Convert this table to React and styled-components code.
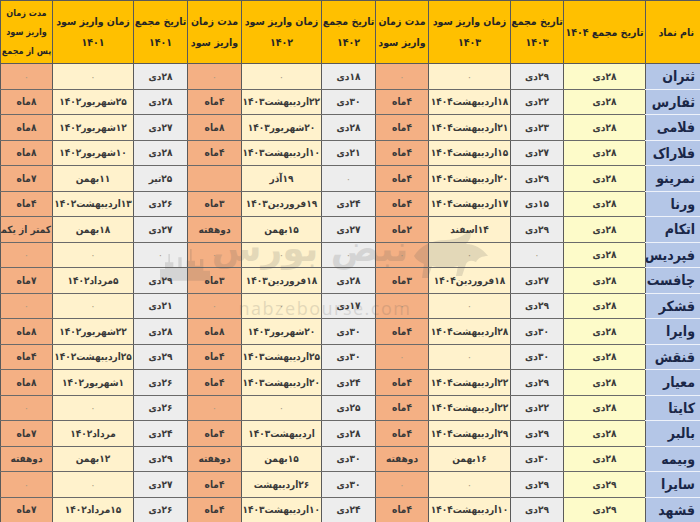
import React from 'react';
import styled, { createGlobalStyle } from 'styled-components';

const GlobalStyle = createGlobalStyle`
  html, body {
    margin: 0;
    padding: 0;
    background: #ffffff;
  }
  body {
    font-family: "DejaVu Sans Condensed", "DejaVu Sans", sans-serif;
  }
`;

const Page = styled.div`
  position: relative;
  width: 700px;
  height: 522px;
  overflow: hidden;
`;

const Table = styled.table`
  width: 700px;
  border-collapse: collapse;
  table-layout: fixed;
  direction: rtl;
`;

const HeadCell = styled.th`
  height: 62px;
  padding: 0;
  background: #ffc000;
  border: 1px solid #5a5a5a;
  color: #262626;
  font-family: "DejaVu Sans Condensed", "DejaVu Sans", sans-serif;
  font-size: ${p => (p.$small ? '9px' : '10.5px')};
  font-weight: 700;
  line-height: ${p => (p.$small ? '19px' : '21px')};
  letter-spacing: ${p => (p.$small ? '-0.3px' : '0')};
  text-align: ${p => (p.$align === 'right' ? 'right' : 'center')};
  padding-right: ${p => (p.$align === 'right' ? '6px' : '0')};
  vertical-align: middle;
  white-space: nowrap;
  overflow: hidden;
`;

const cellColors = {
  name: '#b4c6e7',
  m4: '#fdfbc9',
  m: '#ededed',
  p: '#fff2cc',
  d: '#f4b084',
};

const Cell = styled.td`
  height: 24.5px;
  padding: 0 1px;
  background: ${p => cellColors[p.$kind]};
  border-left: 1px solid #5a5a5a;
  border-right: 1px solid #5a5a5a;
  border-bottom: 1px solid ${p => (p.$kind === 'name' ? '#eef2fa' : '#6a6a6a')};
  color: ${p => (p.$kind === 'name' ? '#1a2748' : '#3a3a3a')};
  font-family: "DejaVu Sans Condensed", "DejaVu Sans", sans-serif;
  font-size: ${p => (p.$kind === 'name' ? '14px' : '10px')};
  font-weight: 700;
  text-align: ${p => (p.$kind === 'name' ? 'right' : 'center')};
  padding-right: ${p => (p.$kind === 'name' ? '5px' : '1px')};
  white-space: nowrap;
  overflow: hidden;
`;

const Zero = styled.span`
  color: #a89a82;
  font-weight: 400;
`;

const Watermark = styled.div`
  position: absolute;
  left: 205px;
  top: 216px;
  width: 240px;
  height: 115px;
  pointer-events: none;
  opacity: 0.16;
  display: flex;
  flex-direction: column;
  align-items: center;
`;

const MarkRow = styled.div`
  display: flex;
  align-items: flex-end;
  gap: 2px;
  direction: rtl;
`;

const MarkTitle = styled.div`
  font-family: "DejaVu Sans", sans-serif;
  font-size: 36px;
  font-weight: 700;
  color: #555555;
  line-height: 66px;
  white-space: nowrap;
`;

const MarkSite = styled.div`
  font-family: "Open Sans", "Liberation Sans", sans-serif;
  font-size: 18px;
  letter-spacing: 1.5px;
  color: #555555;
  margin-top: 14px;
`;

const widths = [55, 82, 53, 82, 53, 54, 80, 54, 54, 81, 52];
const kinds = ['name', 'm4', 'm', 'p', 'd', 'm', 'p', 'd', 'm', 'p', 'd'];

const headers = [
  { lines: ['نام نماد'], align: 'right' },
  { lines: ['تاریخ مجمع ۱۴۰۴'] },
  { lines: ['تاریخ مجمع', '۱۴۰۳'] },
  { lines: ['زمان واریز سود', '۱۴۰۳'] },
  { lines: ['مدت زمان', 'واریز سود'] },
  { lines: ['تاریخ مجمع', '۱۴۰۲'] },
  { lines: ['زمان واریز سود', '۱۴۰۲'] },
  { lines: ['مدت زمان', 'واریز سود'] },
  { lines: ['تاریخ مجمع', '۱۴۰۱'] },
  { lines: ['زمان واریز سود', '۱۴۰۱'] },
  { lines: ['مدت زمان', 'واریز سود', 'پس از مجمع'], small: true },
];

const Z = '۰';

const rows = [
  ['ثتران', '۲۸دی', '۲۹دی', Z, Z, '۱۸دی', Z, Z, '۲۸دی', Z, Z],
  ['ثفارس', '۲۸دی', '۲۲دی', '۱۸اردیبهشت۱۴۰۴', '۴ماه', '۳۰دی', '۲۲اردیبهشت۱۴۰۳', '۴ماه', '۲۸دی', '۲۵شهریور۱۴۰۲', '۸ماه'],
  ['فلامی', '۲۸دی', '۲۳دی', '۲۱اردیبهشت۱۴۰۴', '۴ماه', '۲۸دی', '۲۰شهریور۱۴۰۳', '۸ماه', '۲۷دی', '۱۲شهریور۱۴۰۲', '۸ماه'],
  ['فلاراک', '۲۸دی', '۲۷دی', '۱۵اردیبهشت۱۴۰۴', '۴ماه', '۲۱دی', '۱۰اردیبهشت۱۴۰۳', '۴ماه', '۲۸دی', '۱۰شهریور۱۴۰۲', '۸ماه'],
  ['نمرینو', '۲۸دی', '۲۹دی', '۲۰اردیبهشت۱۴۰۴', '۴ماه', Z, '۱۹آذر', '', '۲۵تیر', '۱۱بهمن', '۷ماه'],
  ['ورنا', '۲۸دی', '۱۵دی', '۱۷اردیبهشت۱۴۰۴', '۴ماه', '۲۴دی', '۱۹فروردین۱۴۰۳', '۳ماه', '۲۶دی', '۱۳اردیبهشت۱۴۰۲', '۴ماه'],
  ['اتکام', '۲۸دی', '۲۹دی', '۱۴اسفند', '۲ماه', '۲۷دی', '۱۵بهمن', 'دوهفته', '۲۷دی', '۱۸بهمن', 'کمتر از یکماه'],
  ['فپردیس', '۲۸دی', Z, Z, Z, Z, Z, Z, Z, Z, Z],
  ['چافست', '۲۸دی', '۲۷دی', '۱۸فروردین۱۴۰۴', '۳ماه', '۲۸دی', '۱۸فروردین۱۴۰۳', '۳ماه', '۲۹دی', '۵مرداد۱۴۰۲', '۷ماه'],
  ['قشکر', '۲۸دی', '۲۹دی', Z, Z, '۱۷دی', Z, Z, '۲۱دی', Z, Z],
  ['وایرا', '۲۸دی', '۳۰دی', '۲۸اردیبهشت۱۴۰۴', '۴ماه', '۳۰دی', '۲۰شهریور۱۴۰۳', '۸ماه', '۲۸دی', '۲۲شهریور۱۴۰۲', '۸ماه'],
  ['قنقش', '۲۸دی', '۳۰دی', Z, Z, '۳۰دی', '۲۵اردیبهشت۱۴۰۳', '۴ماه', '۲۹دی', '۲۵اردیبهشت۱۴۰۲', '۴ماه'],
  ['معیار', '۲۸دی', '۲۹دی', '۲۲اردیبهشت۱۴۰۴', '۴ماه', '۲۴دی', '۲۰اردیبهشت۱۴۰۳', '۴ماه', '۲۶دی', '۱شهریور۱۴۰۲', '۸ماه'],
  ['کایتا', '۲۸دی', '۲۲دی', '۲۲اردیبهشت۱۴۰۴', '۴ماه', '۲۵دی', Z, Z, '۲۶دی', Z, Z],
  ['بالبر', '۲۸دی', '۲۹دی', '۲۹اردیبهشت۱۴۰۴', '۴ماه', '۲۸دی', 'اردیبهشت۱۴۰۳', '۴ماه', '۲۴دی', 'مرداد۱۴۰۲', '۷ماه'],
  ['وبیمه', '۲۸دی', '۳۰دی', '۱۶بهمن', 'دوهفته', '۳۰دی', '۱۵بهمن', 'دوهفته', '۲۹دی', '۱۲بهمن', 'دوهفته'],
  ['سایرا', '۲۹دی', '۲۹دی', Z, Z, '۳۰دی', '۲۶اردیبهشت', '۴ماه', '۲۷دی', Z, Z],
  ['قشهد', '۲۹دی', '۲۹دی', '۱۰اردیبهشت۱۴۰۴', '۴ماه', '۲۴دی', '۱۰اردیبهشت۱۴۰۳', '۴ماه', '۲۶دی', '۱۵مرداد۱۴۰۲', '۷ماه'],
];

const Bull = () => (
  <svg width="80" height="56" viewBox="0 0 80 56">
    <path
      d="M4 30 C10 20 22 14 36 14 C46 14 54 10 60 4 C62 10 60 14 56 18 C64 18 72 22 78 30 C72 30 68 32 66 36 C62 34 58 34 56 38 L52 50 L46 50 L48 40 C40 42 30 42 22 40 L18 52 L12 52 L14 38 C10 36 6 34 4 30 Z"
      fill="#555555"
    />
  </svg>
);

const Skyline = () => (
  <svg width="50" height="36" viewBox="0 0 60 40">
    <path d="M0 40 V26 H6 V18 H10 V8 H12 V18 H16 V24 H22 V12 H26 V24 H32 V16 H36 V2 H38 V16 H42 V22 H48 V14 H52 V28 H60 V40 Z" fill="#555555" />
  </svg>
);

const App = () => (
  <Page>
    <GlobalStyle />
    <Table>
      <colgroup>
        {widths.map((w, i) => (
          <col key={i} style={{ width: w }} />
        ))}
      </colgroup>
      <thead>
        <tr>
          {headers.map((h, i) => (
            <HeadCell key={i} $align={h.align} $small={h.small}>
              {h.lines.map((l, j) => (
                <div key={j}>{l}</div>
              ))}
            </HeadCell>
          ))}
        </tr>
      </thead>
      <tbody>
        {rows.map((r, ri) => (
          <tr key={ri}>
            {r.map((v, ci) => (
              <Cell key={ci} $kind={kinds[ci]}>
                {v === Z ? <Zero>{v}</Zero> : v}
              </Cell>
            ))}
          </tr>
        ))}
      </tbody>
    </Table>
    <Watermark>
      <MarkRow>
        <Bull />
        <MarkTitle>نبض بورس</MarkTitle>
        <Skyline />
      </MarkRow>
      <MarkSite>nabzebourse.com</MarkSite>
    </Watermark>
  </Page>
);

export default App;
